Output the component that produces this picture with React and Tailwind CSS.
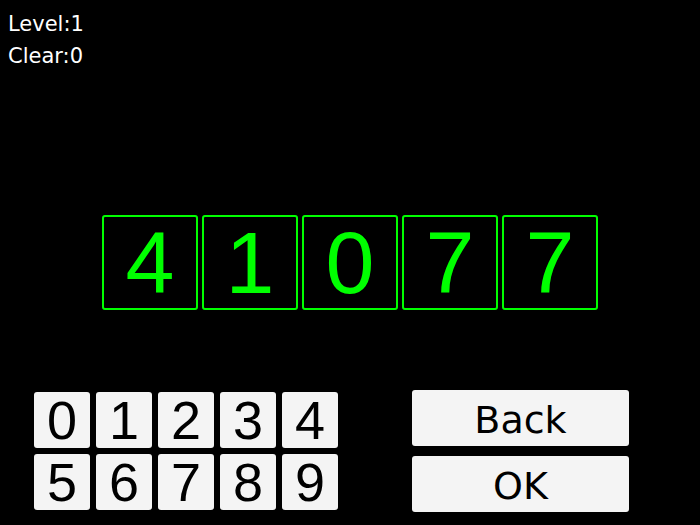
import React from "react";

const digits = ["4", "1", "0", "7", "7"];
const row1 = ["0", "1", "2", "3", "4"];
const row2 = ["5", "6", "7", "8", "9"];

function Key({ d }) {
  return (
    <div className="flex h-[56px] w-[56px] items-center justify-center rounded-[3px] bg-[#f4f4f4] text-[54px] leading-none text-black [font-family:'Liberation_Sans',Arial,sans-serif]">
      {d}
    </div>
  );
}

export default function App() {
  return (
    <div className="flex h-[525px] w-[700px] flex-col overflow-hidden bg-black">
      <div className="h-[71px] pl-[8px] pt-[8px] text-[21px] leading-[32px] text-white [font-family:'DejaVu_Sans',sans-serif]">
        <div>Level:1</div>
        <div>Clear:0</div>
      </div>
      <div className="mt-[144px] flex justify-center gap-[4px]">
        {digits.map((d, i) => (
          <div
            key={i}
            className="flex h-[95px] w-[96px] items-center justify-center rounded-[3px] border-2 border-[#00ff00] text-[88px] leading-none text-[#00ff00] [font-family:'Liberation_Sans',Arial,sans-serif]"
          >
            {d}
          </div>
        ))}
      </div>
      <div className="mt-[80px] flex items-start">
        <div className="ml-[34px] mt-[2px] flex flex-col gap-[6px]">
          <div className="flex gap-[6px]">
            {row1.map((d) => (
              <Key key={d} d={d} />
            ))}
          </div>
          <div className="flex gap-[6px]">
            {row2.map((d) => (
              <Key key={d} d={d} />
            ))}
          </div>
        </div>
        <div className="ml-[74px] flex flex-col gap-[10px]">
          <div className="flex h-[56px] w-[217px] items-center justify-center rounded-[3px] bg-[#f4f4f4] pt-[3px] text-[38px] leading-none text-black [font-family:'DejaVu_Sans',sans-serif]">
            Back
          </div>
          <div className="flex h-[56px] w-[217px] items-center justify-center rounded-[3px] bg-[#f4f4f4] pt-[3px] text-[38px] leading-none text-black [font-family:'DejaVu_Sans',sans-serif]">
            OK
          </div>
        </div>
      </div>
    </div>
  );
}
